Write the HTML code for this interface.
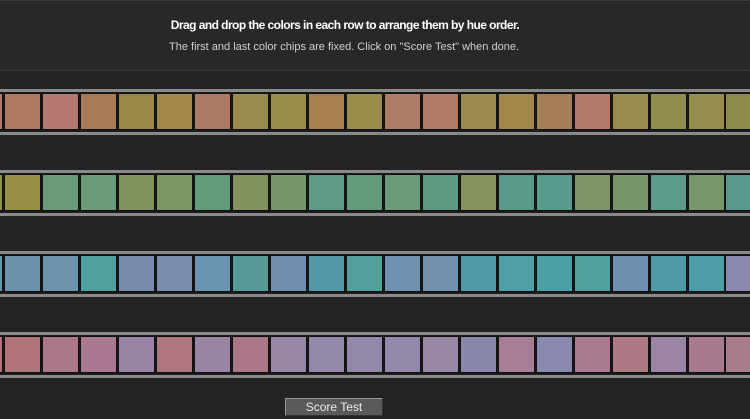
<!DOCTYPE html>
<html><head><style>
body{margin:0;width:750px;height:419px;background:#232323;overflow:hidden;font-family:"Liberation Sans",Arial,sans-serif;position:relative}
.hdr{position:absolute;left:0;top:0;width:750px;height:71px;background:#282828;border-bottom:1px solid #3a3a3a;border-top:1px solid #3a3a3a;box-sizing:border-box}
.t1{position:absolute;top:17px;left:0;width:690px;text-align:center;color:#fff;font-weight:bold;font-size:12px;letter-spacing:-0.55px}
.t2{position:absolute;top:40px;left:0;width:688px;text-align:center;color:#d0d0d0;font-size:11px;letter-spacing:0px}
.row{position:absolute;left:0;width:750px;height:46px;border-top:3px solid #8a8a8a;border-bottom:3px solid #8a8a8a;box-sizing:border-box;background:#1e1e1e}
.row div{position:absolute;top:1px;width:35px;height:35px;border:1px solid #111;outline:1px solid #1a1a1a;box-sizing:content-box}
.btn{position:absolute;left:285px;top:398px;width:98px;height:18px;background:#5a5a5a;border:1px solid #999;border-right-color:#333;border-bottom-color:#333;box-sizing:border-box;color:#eee;font-size:12px;text-align:center;line-height:16px}
</style></head><body>
<div class="hdr"><div class="t1">Drag and drop the colors in each row to arrange them by hue order.</div><div class="t2">The first and last color chips are fixed. Click on "Score Test" when done.</div></div>
<div class="row" id="r1" style="top:89px"></div>
<div class="row" id="r2" style="top:170px"></div>
<div class="row" id="r3" style="top:251px"></div>
<div class="row" id="r4" style="top:332px"></div>
<div class="btn">Score Test</div>
<script>
var rows={
r1:["#b37a70","#ae7a62","#b47a72","#a87b58","#9a8848","#a28748","#ad7a66","#9a8b4c","#9c8d4b","#a6804f","#9a8c4a","#ad7b68","#b07a68","#9b8a4b","#a1874a","#a57e58","#b27a6a","#978c4c","#918d4c","#948d4c","#8d8c4a"],
r2:["#949048","#999048","#6a9a78","#6a9a76","#82925e","#7c9664","#629a7c","#82925f","#76966a","#5e9a86","#649a7c","#6a9a78","#5e9a80","#84925d","#5a9a8a","#589a8c","#7c9468","#76966a","#5c9a8a","#78966a","#5a9a8e"],
r3:["#6896a8","#6c92ae","#6c94ae","#50a0a0","#7a8cae","#7c8cae","#6a94b0","#569a98","#728eae","#5498a8","#52a09c","#7290b0","#7690b0","#509aa8","#4ea0a4","#4ca0a4","#50a09e","#7090b0","#4e9aa8","#4e9ca8","#8a88ae"],
r4:["#b07480","#b07478","#aa7888","#aa7890","#9a84a6","#b07680","#9a84a4","#ac7888","#9886a6","#9488aa","#9488aa","#9488aa","#9888a6","#8a88aa","#a67e96","#8a8aae","#aa7a90","#ae7884","#9c84a4","#a87a90","#a87c8c"]};
for(var k in rows){var r=document.getElementById(k),c=rows[k],h="";
for(var i=0;i<21;i++){var x=i==0?-34:(i==20?725:4+(i-1)*38);h+='<div style="left:'+x+'px;background:'+c[i]+'"></div>';}
r.innerHTML=h;}
</script>
</body></html>
